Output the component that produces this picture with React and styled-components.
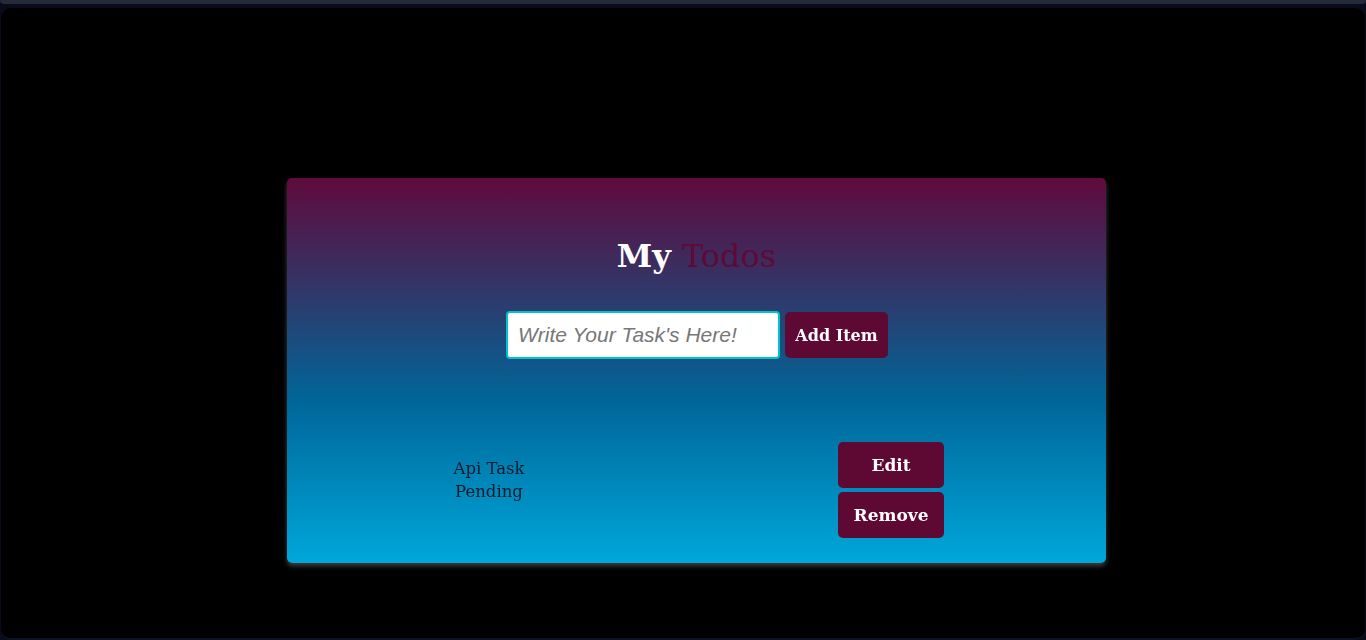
import React from 'react'
import styled, { createGlobalStyle } from 'styled-components'

const GlobalStyle = createGlobalStyle`
  html, body {
    margin: 0;
    padding: 0;
    background: #070b1c;
  }
  body {
    font-family: "DejaVu Serif", "Liberation Serif", serif;
  }
`

const TopStrip = styled.div`
  height: 4px;
  background: #252a3a;
  border-bottom-left-radius: 6px;
  border-bottom-right-radius: 6px;
`

const Frame = styled.div`
  height: 630px;
  margin: 4px 1px 0;
  background: #000;
  border-radius: 10px;
  border-bottom: 2px solid #0b1124;
  display: flex;
  flex-direction: column;
`

const Card = styled.div`
  width: 819px;
  height: 385px;
  margin: 170px 0 0 286px;
  box-sizing: border-box;
  padding-top: 58px;
  border-radius: 5px;
  background: linear-gradient(to bottom, #600a3c 0%, #30386a 30%, #006699 58%, #00a7da 100%);
  box-shadow: 0 3px 5px rgba(70, 70, 70, 0.9);
  display: flex;
  flex-direction: column;
  align-items: center;
`

const Title = styled.h1`
  margin: 0;
  font-size: 32px;
  line-height: 40px;
  font-weight: 700;
  color: #fff;

  span {
    color: #5e0a36;
    font-weight: 400;
  }
`

const Form = styled.div`
  display: flex;
  gap: 5px;
  margin-top: 35px;
  padding-left: 1px;
`

const Input = styled.input`
  width: 274px;
  height: 48px;
  box-sizing: border-box;
  border: 2px solid #00c3cb;
  border-radius: 4px;
  padding: 0 10px;
  font-family: "Liberation Sans", Arial, sans-serif;
  font-style: italic;
  font-size: 21px;
  color: #333;
  outline: none;

  &::placeholder {
    color: #777;
  }
`

const Button = styled.button`
  width: ${p => p.$w || 106}px;
  height: 46px;
  border: none;
  border-radius: 5px;
  background: #5e0834;
  color: #fff;
  font-family: "DejaVu Serif", "Liberation Serif", serif;
  font-weight: 700;
  font-size: 17px;
  padding: 0;
  cursor: pointer;
`

const AddButton = styled(Button)`
  margin-top: 1px;
  font-size: 16px;
`

const TaskRow = styled.div`
  align-self: stretch;
  display: flex;
  align-items: flex-start;
  margin-top: 83px;
  padding-left: 102px;
  gap: 249px;
`

const TaskText = styled.div`
  width: 200px;
  padding-top: 15px;
  text-align: center;
  font-size: 16.5px;
  line-height: 23px;
  color: #0e1a28;
`

const Actions = styled.div`
  display: flex;
  flex-direction: column;
  gap: 4px;
`

export default function App() {
  return (
    <>
      <GlobalStyle />
      <TopStrip />
      <Frame>
        <Card>
          <Title>My <span>Todos</span></Title>
          <Form>
            <Input autoFocus placeholder="Write Your Task's Here!" />
            <AddButton $w={103}>Add Item</AddButton>
          </Form>
          <TaskRow>
            <TaskText>
              <div>Api Task</div>
              <div>Pending</div>
            </TaskText>
            <Actions>
              <Button>Edit</Button>
              <Button>Remove</Button>
            </Actions>
          </TaskRow>
        </Card>
      </Frame>
    </>
  )
}
